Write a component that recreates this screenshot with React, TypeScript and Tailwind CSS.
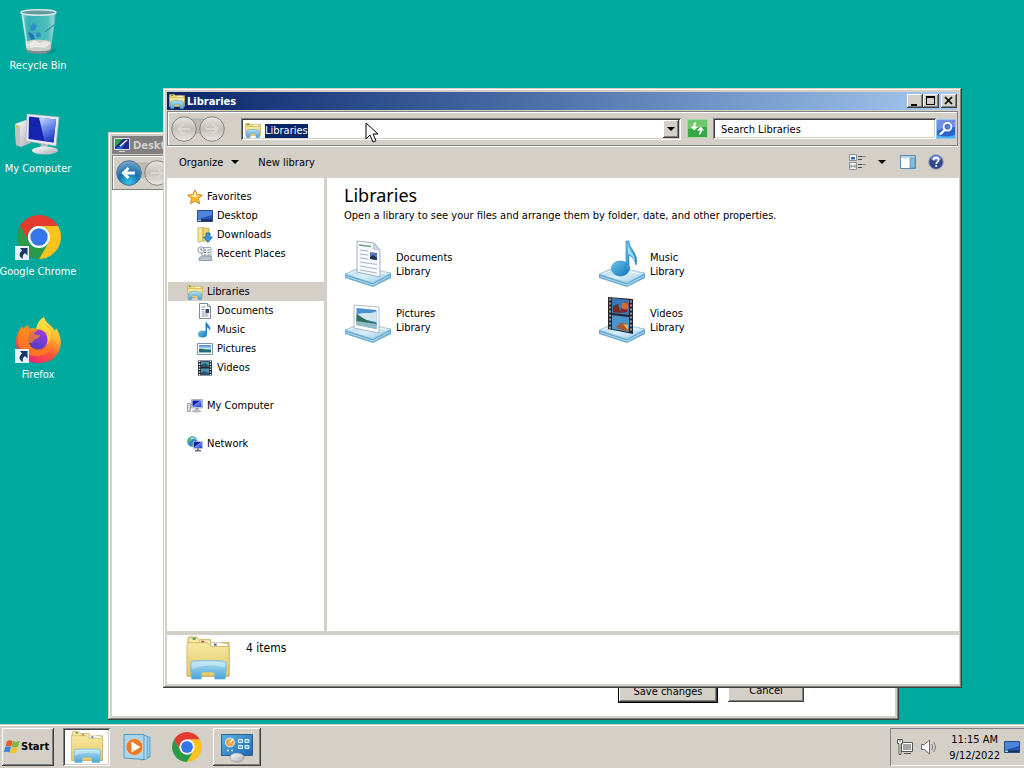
import React, { useEffect, useRef } from "react";

type IconProps = { className?: string };

const raised =
  "bg-[#d4d0c8] shadow-[inset_-1px_-1px_#404040,inset_1px_1px_#fff,inset_-2px_-2px_#808080]";
const sunken =
  "bg-white shadow-[inset_1px_1px_#808080,inset_-1px_-1px_#fff,inset_2px_2px_#404040,inset_-2px_-2px_#d4d0c8]";
const frame =
  "bg-[#d4d0c8] shadow-[inset_-1px_-1px_#404040,inset_1px_1px_#d4d0c8,inset_-2px_-2px_#808080,inset_2px_2px_#fff]";
const band =
  "border border-[#808080] shadow-[inset_1px_1px_#fff,0_1px_#fff]";

/* shared gradients */
const Gradients: React.FC = () => (
  <svg width="0" height="0" className="absolute" aria-hidden="true">
    <defs>
      <linearGradient id="screen" x1="0" y1="0" x2="1" y2="1">
        <stop offset="0" stopColor="#0a1a9c" />
        <stop offset="0.42" stopColor="#1424b4" />
        <stop offset="0.46" stopColor="#6b8af0" />
        <stop offset="1" stopColor="#2036c8" />
      </linearGradient>
      <linearGradient id="glass" x1="0.3" y1="0" x2="0.7" y2="1">
        <stop offset="0" stopColor="#b9cdfa" />
        <stop offset="0.5" stopColor="#5b7ce6" />
        <stop offset="1" stopColor="#1c2cb8" />
      </linearGradient>
      <linearGradient id="folder" x1="0" y1="0" x2="0" y2="1">
        <stop offset="0" stopColor="#f6e9a0" />
        <stop offset="1" stopColor="#e3c966" />
      </linearGradient>
      <linearGradient id="stand" x1="0" y1="0" x2="0" y2="1">
        <stop offset="0" stopColor="#b4dff2" />
        <stop offset="1" stopColor="#4aa4dc" />
      </linearGradient>
      <linearGradient id="tray" x1="0" y1="0" x2="1" y2="1">
        <stop offset="0" stopColor="#9fcde6" />
        <stop offset="0.5" stopColor="#daeff9" />
        <stop offset="1" stopColor="#8fc4e2" />
      </linearGradient>
      <linearGradient id="note" x1="0" y1="0" x2="1" y2="1">
        <stop offset="0" stopColor="#6cc6f2" />
        <stop offset="1" stopColor="#0d72b8" />
      </linearGradient>
      <linearGradient id="photo" x1="0" y1="0" x2="0" y2="1">
        <stop offset="0" stopColor="#3f86c4" />
        <stop offset="0.5" stopColor="#d3ecf4" />
        <stop offset="0.6" stopColor="#4f8b78" />
        <stop offset="1" stopColor="#8fc8d6" />
      </linearGradient>
      <radialGradient id="blueOrb" cx="0.5" cy="0.9" r="0.9">
        <stop offset="0" stopColor="#38c4ee" />
        <stop offset="0.5" stopColor="#1670ae" />
        <stop offset="1" stopColor="#7fa9cc" />
      </radialGradient>
      <linearGradient id="grayOrb" x1="0" y1="0" x2="0" y2="1">
        <stop offset="0" stopColor="#e9e7e3" />
        <stop offset="0.5" stopColor="#c3c0ba" />
        <stop offset="1" stopColor="#eceae6" />
      </linearGradient>
      <linearGradient id="fox" x1="0.8" y1="0" x2="0.3" y2="1">
        <stop offset="0" stopColor="#fff44f" />
        <stop offset="0.35" stopColor="#ffb32c" />
        <stop offset="0.65" stopColor="#ff5a36" />
        <stop offset="1" stopColor="#e8207a" />
      </linearGradient>
      <linearGradient id="foxCore" x1="0.7" y1="0" x2="0.3" y2="1">
        <stop offset="0" stopColor="#a33cd8" />
        <stop offset="1" stopColor="#4a3fc4" />
      </linearGradient>
      <linearGradient id="bin" x1="0" y1="0" x2="1" y2="0">
        <stop offset="0" stopColor="#c4e6ea" stopOpacity="0.8" />
        <stop offset="0.2" stopColor="#4fb3bf" stopOpacity="0.7" />
        <stop offset="0.75" stopColor="#6fc6cc" stopOpacity="0.7" />
        <stop offset="0.9" stopColor="#b5dfe2" stopOpacity="0.8" />
        <stop offset="1" stopColor="#4a8a90" stopOpacity="0.9" />
      </linearGradient>
      <linearGradient id="metal" x1="0" y1="0" x2="1" y2="1">
        <stop offset="0" stopColor="#ffffff" />
        <stop offset="1" stopColor="#a9adb5" />
      </linearGradient>
      <linearGradient id="panelBlue" x1="0" y1="0" x2="1" y2="1">
        <stop offset="0" stopColor="#5db4ea" />
        <stop offset="1" stopColor="#1a66ac" />
      </linearGradient>
    </defs>
  </svg>
);

const Shortcut: React.FC = () => (
  <g>
    <path d="M1 32h14v14H1z" fill="#e9f2f8" />
    <path
      d="M6 34h7.500v7.500l-2.600-2.500c-2 1.800-2.600 3.300-2 5.800-4-1.500-4.600-5.600-.7-8.400z"
      fill="#15386b"
    />
  </g>
);

const RecycleBin: React.FC<IconProps> = ({ className }) => (
  <svg viewBox="0 0 48 48" className={className}>
    <path d="M34 42l9-2-2 4-10 3z" fill="#087f78" opacity=".5" />
    <path d="M7 4l5.500 37c2 4 21 4 24 0l6-37z" fill="url(#bin)" />
    <path d="M11.500 34c4-3 22-3 26 0l-1 8c-4 4-20 4-24 0z" fill="#c9cfca" />
    <path d="M14 36l6-4 6 3 5-2 6 2-6 5-8-1-7 1z" fill="#e9e8e3" />
    <path d="M12.500 41c4 3 20 3 24 0v2c-4 4-20 4-24 0z" fill="#7f8b8c" />
    <path d="M16 18l4-3 3 3-2 4-4 1z" fill="#2a88c8" opacity=".8" />
    <path d="M14 24l5 2 2 5-4 1z" fill="#1d62b4" opacity=".8" />
    <path d="M22 25l4-1 1 4-4 2z" fill="#2a78c4" opacity=".7" />
    <path d="M31 24l9-7" stroke="#3f8d98" strokeWidth="1.200" />
    <ellipse cx="24.500" cy="4.500" rx="17.500" ry="2.700" fill="#62999e" stroke="#d9e9ea" strokeWidth="1.500" />
    <path d="M8.500 7l5 33" stroke="#fff" strokeOpacity=".6" strokeWidth="1.500" />
  </svg>
);

const Computer: React.FC<IconProps> = ({ className }) => (
  <svg viewBox="0 0 48 48" className={className}>
    <path d="M1 13l11-4 5 3v20L7 36l-5-2z" fill="url(#metal)" />
    <path d="M1 13l5 2v20l-4-1z" fill="#c4c0bb" />
    <path d="M3 15v2" stroke="#e4c23e" strokeWidth="2" />
    <path d="M27 32l7 1-1 6h-7z" fill="#b6bac2" />
    <ellipse cx="31" cy="39.500" rx="13" ry="4" fill="url(#metal)" />
    <path d="M13 3l32 3-3 29-30-5z" fill="#e8eaf0" stroke="#a9aeba" strokeWidth=".6" />
    <path d="M15 5.500l27 3-2.500 23L14.500 28z" fill="#1524b0" />
    <path d="M25 6.600l17 1.900-2.500 23-9-1.400z" fill="url(#glass)" />
  </svg>
);

const ChromeArt: React.FC = () => (
  <g>
    <path d="M24 13H43.050A22 22 0 0 0 4.950 13L14.470 29.500A11 11 0 0 1 24 13Z" fill="#e33b2e" />
    <path d="M43.050 13H24A11 11 0 0 1 33.530 29.500L24 46A22 22 0 0 0 43.050 13Z" fill="#fcc31e" />
    <path d="M4.950 13A22 22 0 0 0 24 46L33.530 29.500A11 11 0 0 1 14.470 29.500Z" fill="#2a9a48" />
    <circle cx="24" cy="24" r="11" fill="#fff" />
    <circle cx="24" cy="24" r="8.700" fill="#3576e8" />
  </g>
);

const Chrome: React.FC<IconProps> = ({ className }) => (
  <svg viewBox="2 2 44 44" className={className}>
    <ChromeArt />
  </svg>
);

const ChromeShortcut: React.FC<IconProps> = ({ className }) => (
  <svg viewBox="0 0 48 48" className={className}>
    <g transform="translate(1 -1)">
      <ChromeArt />
    </g>
    <Shortcut />
  </svg>
);

const FirefoxShortcut: React.FC<IconProps> = ({ className }) => (
  <svg viewBox="0 0 48 48" className={className}>
    <path
      d="M30 0c1 4 4 6 7 9 1 1 3 3 4 5l1-3c4 6 6 13 4 20-3 10-11 15-21 15C12 46 2 38 2 25c0-6 2-11 5-14l1-2 1 3 5-4 1 4c3-1 5-1 8 0 0-5 3-10 7-12z"
      fill="url(#fox)"
    />
    <circle cx="24" cy="22.500" r="10" fill="url(#foxCore)" />
    <path
      d="M7 11l1-2 1 3 5-4 1 4c3-1 6 0 8 1l1 1c-3 1-4 2-4 3 2 1 5 1 6 1 0 3-4 4-6 5-1 3-3 3-5 3 1 5 6 7 11 7 6 0 10-4 12-9 1 7-5 14-13 15C13 40 4 33 4 24c0-5 1-9 3-13z"
      fill="#ff8a16"
      fillOpacity=".7"
    />
    <path d="M22 12c5-1 10 1 13 7l-3-2c2 4 2 8 0 11 5-4 6-10 3-16-4-3-5-7-5-12-5 3-7 7-8 12z" fill="#ffe23e" fillOpacity=".75" />
    <Shortcut />
  </svg>
);

const LibrariesIcon: React.FC<IconProps> = ({ className }) => (
  <svg viewBox="0 0 16 16" className={className}>
    <path d="M.5 1.500h5l1 1h9v4H.5z" fill="#ecd67c" stroke="#bfa24a" strokeWidth=".6" />
    <path d="M2 2.500h2" stroke="#3d9c55" />
    <path d="M8 3.300h5" stroke="#fff" />
    <path d="M.5 4.500h15v9H.5z" fill="url(#folder)" stroke="#c9ae55" strokeWidth=".6" />
    <path d="M1.500 10c0-3.500 13-3.500 13 0v5.500H11V12c-1-1-5-1-6 0v3.500H1.500z" fill="url(#stand)" stroke="#4d9ac6" strokeWidth=".5" />
  </svg>
);

const BigFolder: React.FC<IconProps> = ({ className }) => (
  <svg viewBox="0 0 48 48" className={className}>
    <path d="M4 2h8l2 3h13v4h9l2-1h8v35H3V4z" fill="#e5cc72" stroke="#b49b4c" strokeWidth=".7" />
    <path d="M4 3h8l2 2h4v4H4z" fill="#f7e9a4" />
    <path d="M15 5h10l2 2v4H15z" fill="#fbf2c4" stroke="#b49b4c" strokeWidth=".5" />
    <path d="M27 8h10l8 1v4H27z" fill="#fffdf0" stroke="#b49b4c" strokeWidth=".5" />
    <path d="M8 4h3" stroke="#2f9a4c" strokeWidth="2" />
    <path d="M17 7h3" stroke="#c8402c" strokeWidth="2" />
    <path d="M30 10h3" stroke="#3a63b8" strokeWidth="2" />
    <path d="M2 8h22l4 4h18v31H2z" fill="url(#folder)" stroke="#c0a552" strokeWidth=".7" />
    <path d="M6 28c1-2 36-2 37 0v9l-1 9H31v-7c-3-1-11-1-14 0v7H7l-1-9z" fill="url(#stand)" stroke="#6fb4dc" strokeWidth=".7" />
    <path d="M7 29c4-1 32-1 35 0v5c-10-3-25-3-35 2z" fill="#fff" fillOpacity=".35" />
  </svg>
);

const Star: React.FC<IconProps> = ({ className }) => (
  <svg viewBox="0 0 16 16" className={className}>
    <path
      d="M8 .8l2.200 4.700 5.200.6-3.900 3.500 1.100 5.200L8 12.300l-4.600 2.500 1.100-5.200L.6 6.100l5.200-.6z"
      fill="#fbb82e"
      stroke="#c77a18"
      strokeWidth=".8"
    />
    <path d="M8 2.500l1.500 3.800 3.500.5L8 8.500 3 6.800l3.500-.5z" fill="#fff0a8" />
  </svg>
);

const DesktopIcon: React.FC<IconProps> = ({ className }) => (
  <svg viewBox="0 0 16 16" className={className}>
    <path d="M.5 2.500h15v11H.5z" fill="#2457b4" stroke="#274a80" />
    <path d="M1 3h14v4L1 11z" fill="#4d86dc" />
    <path d="M1 11.500h14V13H1z" fill="#1b2d50" />
    <path d="M1 11.500h3V13H1z" fill="#9fd2f0" />
  </svg>
);

const Downloads: React.FC<IconProps> = ({ className }) => (
  <svg viewBox="0 0 16 16" className={className}>
    <path d="M1 1l5-.5V14l-5 1z" fill="#f6e69a" stroke="#c0a040" strokeWidth=".7" />
    <path d="M6 1h6v13H6z" fill="#ecd473" stroke="#c0a040" strokeWidth=".7" />
    <path d="M9 6h4v4h2.500L11 15.500 6.500 10H9z" fill="#3a96dc" stroke="#1a5c9c" strokeWidth=".7" />
  </svg>
);

const Recent: React.FC<IconProps> = ({ className }) => (
  <svg viewBox="0 0 16 16" className={className}>
    <path d="M5 1.500h9v10H5z" fill="#f0f3f6" stroke="#8794a2" strokeWidth=".8" />
    <path d="M7 4h2m1.500 0h2M7 6.500h2m1.500 0h2M7 9h2m1.500 0h2" stroke="#6d7c8c" />
    <path d="M2 12l3-2h9l1 4.500H2z" fill="#b8c2cc" stroke="#78838e" strokeWidth=".7" />
    <circle cx="4" cy="4" r="3.200" fill="#eef4fa" stroke="#7b8ca0" strokeWidth=".8" />
    <path d="M4 2.200V4h1.600" stroke="#40506a" strokeWidth=".7" fill="none" />
  </svg>
);

const DocumentIcon: React.FC<IconProps> = ({ className }) => (
  <svg viewBox="0 0 16 16" className={className}>
    <path d="M2.500.5h8l3 3v12h-11z" fill="#fff" stroke="#7f8a96" />
    <path d="M10.500.5v3h3" fill="#dfe6ec" stroke="#7f8a96" />
    <path d="M4.500 4h4M4.500 6.500h3M4.500 9h3M4.500 11h7M4.500 13h7" stroke="#8b98ac" />
    <path d="M8.500 6h3.500v4H8.500z" fill="#31456e" />
  </svg>
);

const MusicIcon: React.FC<IconProps> = ({ className }) => (
  <svg viewBox="0 0 16 16" className={className}>
    <ellipse cx="5.500" cy="12" rx="4.500" ry="3.500" fill="url(#note)" />
    <path d="M8.500.5h1.500c.5 2.500 4.500 3.500 3 8.500-.5-2-1.500-3-3-3.500V12H8.500z" fill="#2284c4" />
  </svg>
);

const PictureIcon: React.FC<IconProps> = ({ className }) => (
  <svg viewBox="0 0 16 16" className={className}>
    <path d="M.5 2.500h15v11H.5z" fill="#fff" stroke="#7f93a6" />
    <path d="M2 4h12v8H2z" fill="url(#photo)" />
    <path d="M2 8c3-1 5 1 12 1v2H2z" fill="#256a6c" />
  </svg>
);

const VideoIcon: React.FC<IconProps> = ({ className }) => (
  <svg viewBox="0 0 16 16" className={className}>
    <path d="M1 .5h14v15H1z" fill="#20262e" />
    <path d="M4 1.500h8V7H4zM4 8.500h8v6H4z" fill="#4c93b8" />
    <path d="M4 5l4-2 4 3v1H4zM4 13l3-2 5 2v1.500H4z" fill="#27546e" />
    <path d="M2.500 1v14M13.500 1v14" stroke="#f0f4f8" strokeWidth="1.400" strokeDasharray="1.300 1.300" />
  </svg>
);

const MyComputerSmall: React.FC<IconProps> = ({ className }) => (
  <svg viewBox="0 0 16 16" className={className}>
    <path d="M.5 5.500h3v8h-3z" fill="#d6d8dc" stroke="#83888f" strokeWidth=".7" />
    <path d="M4.500 1.500h11v8.500h-11z" fill="#dfe2ea" stroke="#9298a6" strokeWidth=".7" />
    <path d="M5.500 2.500h9V9h-9z" fill="url(#screen)" />
    <path d="M8.500 10h3v2h-3z" fill="#9aa0aa" />
    <ellipse cx="9.500" cy="13" rx="4.500" ry="1.500" fill="#b8bcc4" />
  </svg>
);

const NetworkIcon: React.FC<IconProps> = ({ className }) => (
  <svg viewBox="0 0 16 16" className={className}>
    <circle cx="5.500" cy="5.500" r="5.200" fill="#2c86c8" />
    <path d="M2 2.500c2-2 4-2 5-1L5 4 3 5.500.7 7zM4 7l3 1-1 2.500z" fill="#5cc06a" />
    <path d="M4 2.500c3-1 5 0 6 2" stroke="#d0f0ff" fill="none" />
    <path d="M6.500 5.500h9v7h-9z" fill="url(#screen)" stroke="#c2c8d8" strokeWidth=".7" />
    <path d="M10 12.500h2V14h2v1.500H8V14h2z" fill="#6c7080" />
  </svg>
);

/* pale glass stand under each library picture */
const LibraryBase: React.FC = () => (
  <g>
    <path d="M1 34l17-7 29 6v5L29 47 1 38z" fill="#68a8cc" />
    <path d="M1 34l17-7 29 6-18 10z" fill="url(#tray)" stroke="#8abbd6" strokeWidth=".5" />
    <path d="M4 34l14-5 25 5" stroke="#fff" strokeOpacity=".7" fill="none" />
    <path d="M2 36.500l27 8.500 17-9" stroke="#a5d4ec" strokeWidth="1.200" fill="none" />
  </g>
);

const DocumentsLibrary: React.FC<IconProps> = ({ className }) => (
  <svg viewBox="0 0 48 48" className={className}>
    <LibraryBase />
    <path d="M13 1l17 2 6 7v27L13 32z" fill="#f7f9fd" stroke="#8e9fb6" strokeWidth=".8" />
    <path d="M30 3l-1 6 7 1z" fill="#c9dce4" stroke="#8e9fb6" strokeWidth=".5" />
    <path d="M15 5l12 1.500" stroke="#6f9f86" strokeWidth="1.500" />
    <path d="M16 10l8 1M16 14l8 1M16 18l8 1M16 22l17 2.500M16 26l17 3M16 30l17 3" stroke="#a9b3d0" />
    <path d="M26 12l7 1v7l-7-1z" fill="#4f78b4" />
    <path d="M26 17l3-2 4 3v2l-7-1z" fill="#1f3358" />
  </svg>
);

const PicturesLibrary: React.FC<IconProps> = ({ className }) => (
  <svg viewBox="0 0 48 48" className={className}>
    <LibraryBase />
    <path d="M10 9l25 2v26L10 32z" fill="#fdfdfd" stroke="#9aa8b6" strokeWidth=".8" />
    <path d="M12.500 12l20 2v19L12.500 29z" fill="#4a90cf" />
    <path d="M12.500 19c6-4 14 0 20-4v11l-20-4z" fill="#cfe6f0" />
    <path d="M12.500 18c6 3 10 8 20 9v2l-20-3z" fill="#2f6c56" />
    <path d="M12.500 25l20 3v5L12.500 29z" fill="#8fbcc6" />
  </svg>
);

const MusicLibrary: React.FC<IconProps> = ({ className }) => (
  <svg viewBox="0 0 48 48" className={className}>
    <LibraryBase />
    <ellipse cx="22.500" cy="28.500" rx="9" ry="7.500" fill="url(#note)" stroke="#2576ae" strokeWidth=".6" />
    <path d="M28 1h3c0 8 10 12 7 24-1-5-3-8-7-10v15h-3z" fill="url(#note)" stroke="#2576ae" strokeWidth=".6" />
    <path d="M30 3c1 9 8 11 7 19-1-4-3-7-7-8z" fill="#9adcf8" />
  </svg>
);

const VideosLibrary: React.FC<IconProps> = ({ className }) => (
  <svg viewBox="0 0 48 48" className={className}>
    <LibraryBase />
    <path d="M10 1l25 2v35L10 33z" fill="#23262c" />
    <path d="M14 2l17 2v15l-17-2z" fill="#3979b8" />
    <path d="M14 19l17 2v15l-17-3z" fill="#4a93cf" />
    <path d="M15 10l5-2 2 7 5-10 4 3-2 8-8 1-6-1z" fill="#7a2b25" />
    <circle cx="27" cy="10" r="3.500" fill="#d46a34" />
    <path d="M18 31l5-4 6 1 2 7-8-1z" fill="#a8572f" />
    <path d="M25 28l5 1v5z" fill="#e5c14e" />
    <path d="M12 2.500v30M33 4.500v32" stroke="#aab4c0" strokeWidth="1.600" strokeDasharray="2 2" />
  </svg>
);

const PlayerIcon: React.FC<IconProps> = ({ className }) => (
  <svg viewBox="0 0 32 32" className={className}>
    <path d="M22 5l7 1v20l-7 2z" fill="#8cc8ea" stroke="#4b8fbc" strokeWidth=".7" />
    <path d="M20 4l6 1v23l-6 1z" fill="#b4def4" stroke="#4b8fbc" strokeWidth=".7" />
    <path d="M3 3.500h20v25L3 27z" fill="#a6d6ee" stroke="#4b8fbc" strokeWidth=".9" />
    <circle cx="13.500" cy="16" r="8.500" fill="#ee7a22" stroke="#d9d4cc" strokeWidth=".8" />
    <path d="M10.500 10.500l9 5.500-9 5.500z" fill="#fff" />
  </svg>
);

const ControlPanel: React.FC<IconProps> = ({ className }) => (
  <svg viewBox="0 0 32 32" className={className}>
    <path d="M.5 3.500h31v21H.5z" fill="url(#panelBlue)" stroke="#2c618e" />
    <circle cx="9" cy="11.500" r="4.500" fill="#f0a63c" stroke="#d9edf8" />
    <path d="M9 11.500l3-3.500" stroke="#fff" strokeWidth="1.500" />
    <path d="M17.500 8.500h4v3h-4zM24 8.500h4v3h-4zM17.500 14.500h4v3h-4zM24 14.500h4v3h-4z" fill="#5ab4ea" stroke="#e4f4fc" />
    <path d="M6 19.500h2m2 0h2" stroke="#e4f4fc" strokeWidth="1.500" />
    <ellipse cx="16" cy="26.500" rx="7" ry="4.500" fill="url(#metal)" stroke="#8a9096" strokeWidth=".7" />
  </svg>
);

const WindowsFlag: React.FC<IconProps> = ({ className }) => (
  <svg viewBox="0 0 16 16" className={className}>
    <path d="M3 2.200c2-1.400 3.800-1.300 5.600-.3L7.200 7.400c-2-1-3.600-1-5.700.1z" fill="#e2582c" />
    <path d="M9 2.100c2 1 3.900.9 6.800-.3L14.200 7.600c-2.500 1.200-4.300 1.100-6.600.1z" fill="#7db83c" />
    <path d="M1.300 8.100c2-1.100 3.900-1 5.700-.1l-1.500 5.600C3.600 12.500 2 12.500-.2 13.600z" fill="#3d87d4" />
    <path d="M7.400 8.300c2.200 1 4.200.9 6.600-.2l-1.600 5.600c-2.500 1.200-4.300 1-6.500-.1z" fill="#f6c22e" />
  </svg>
);

const ViewsIcon: React.FC<IconProps> = ({ className }) => (
  <svg viewBox="0 0 18 16" className={className}>
    <path d="M.5.5h7v6h-7zM.5 8.500h7v7h-7z" fill="#fff" stroke="#8d9298" />
    <path d="M2 3h4v2.500H2z" fill="#2a6aa8" />
    <path d="M2 10.500v3l2-2 2 2v-3" stroke="#5d7d64" fill="none" />
    <path d="M9 2.500h4M9 5.500h4M9 10.500h4M9 13.500h4" stroke="#4a4a4a" />
    <path d="M13 2.500h4M13 10.500h4" stroke="#8c8c8c" />
  </svg>
);

const PaneIcon: React.FC<IconProps> = ({ className }) => (
  <svg viewBox="0 0 16 16" className={className}>
    <path d="M.5 1.500h15v13H.5z" fill="#fff" stroke="#5d86ae" />
    <path d="M1 2h14v2H1z" fill="#b4d2ea" />
    <path d="M10 4h5v10h-5z" fill="#84bbe0" stroke="#5d86ae" strokeWidth=".7" />
  </svg>
);

const HelpIcon: React.FC<IconProps> = ({ className }) => (
  <svg viewBox="0 0 16 16" className={className}>
    <circle cx="8" cy="8" r="7.300" fill="#33458f" stroke="#98a0c0" />
    <path d="M2.500 5a6 6 0 0 1 11 0c-3 2-8 2-11 0z" fill="#7c93d8" />
    <path d="M5.500 6.200c0-3.400 5.200-3.200 5.200-.3 0 1.800-2.500 2-2.500 4" stroke="#fff" strokeWidth="1.700" fill="none" />
    <circle cx="8.200" cy="12" r="1.100" fill="#fff" />
  </svg>
);

const RefreshIcon: React.FC<IconProps> = ({ className }) => (
  <svg viewBox="0 0 20 18" className={className}>
    <path d="M.5.500h19v17H.5z" fill="#35a744" stroke="#a5d9a0" />
    <path d="M1 1h18v7C12 6 8 11 1 9z" fill="#6fc86c" />
    <path d="M9 3C6.500 3 6 4.500 6 7H3.500L7 11l3.500-4H8c0-2 0-2.500 1-4z" fill="#fff" />
    <path d="M11 15c2.500 0 3-1.500 3-4h2.500L13 7l-3.500 4H12c0 2 0 2.500-1 4z" fill="#fff" />
  </svg>
);

const SearchIcon: React.FC<IconProps> = ({ className }) => (
  <svg viewBox="0 0 20 20" className={className}>
    <rect x=".5" y=".5" width="19" height="19" rx="1.500" fill="#2c62cc" stroke="#8fc8f0" />
    <path d="M1 1h18v7C12 9 7 9 1 12z" fill="#6f8ee6" />
    <path d="M1 16c6 2 12 2 18 0v3H1z" fill="#48b8ee" />
    <circle cx="11.500" cy="7.800" r="3.900" fill="#4b78dc" stroke="#fff" strokeWidth="1.800" />
    <path d="M8.700 10.800L4.500 15" stroke="#fff" strokeWidth="2.400" strokeLinecap="round" />
  </svg>
);

const PersonalizeIcon: React.FC<IconProps> = ({ className }) => (
  <svg viewBox="0 0 16 16" className={className}>
    <path d="M.5 1.500h15v11H.5z" fill="#1c2b8c" stroke="#e0e0e0" />
    <path d="M1 2h8L1 10z" fill="#2fa04a" />
    <path d="M1 12h6l4-5-4 1z" fill="#2a63d0" />
    <path d="M6 9l7-6" stroke="#fff" strokeWidth="1.500" />
    <path d="M5 14.500h6" stroke="#d8d8d8" />
  </svg>
);

/* back and forward buttons sit on one pill */
const NavArrows: React.FC<{ active?: boolean }> = ({ active }) => (
  <svg viewBox="0 0 56 28" className="h-7 w-14 shrink-0">
    <path d="M14 4h28v17c-8-4-20-4-28 0z" fill="#bdbab4" stroke="#a09d97" strokeWidth=".6" />
    <circle cx="14" cy="14" r="12.300" fill={active ? "url(#blueOrb)" : "url(#grayOrb)"} stroke={active ? "#4d7390" : "#85827d"} />
    <circle cx="42" cy="14" r="12.300" fill="url(#grayOrb)" stroke="#85827d" />
    <path
      d="M20 14H9M13.500 9L8.500 14l5 5"
      stroke={active ? "#fff" : "#d9d7d2"}
      strokeWidth={active ? 3 : 2}
      fill="none"
    />
    <path d="M36 14h11M42.500 9l5 5-5 5" stroke="#d9d7d2" strokeWidth="2" fill="none" />
  </svg>
);

const Caret: React.FC = () => (
  <svg viewBox="0 0 8 4" className="h-1 w-2">
    <path d="M0 0h8L4 4z" fill="#000" />
  </svg>
);

const shortcuts = [
  { label: "Recycle Bin", Icon: RecycleBin },
  { label: "My Computer", Icon: Computer },
  { label: "Google Chrome", Icon: ChromeShortcut },
  { label: "Firefox", Icon: FirefoxShortcut },
];

const navGroups = [
  {
    label: "Favorites",
    Icon: Star,
    items: [
      { label: "Desktop", Icon: DesktopIcon },
      { label: "Downloads", Icon: Downloads },
      { label: "Recent Places", Icon: Recent },
    ],
  },
  {
    label: "Libraries",
    Icon: LibrariesIcon,
    current: true,
    items: [
      { label: "Documents", Icon: DocumentIcon },
      { label: "Music", Icon: MusicIcon },
      { label: "Pictures", Icon: PictureIcon },
      { label: "Videos", Icon: VideoIcon },
    ],
  },
  { label: "My Computer", Icon: MyComputerSmall, items: [] },
  { label: "Network", Icon: NetworkIcon, items: [] },
];

const libraries = [
  { label: "Documents", Icon: DocumentsLibrary },
  { label: "Music", Icon: MusicLibrary },
  { label: "Pictures", Icon: PicturesLibrary },
  { label: "Videos", Icon: VideosLibrary },
];

const SettingsWindow: React.FC = () => (
  <section className={`absolute top-[132px] right-[125px] bottom-1 left-[108px] flex flex-col p-1 ${frame}`}>
    <header className="flex h-[18px] items-center gap-[3px] bg-[#808080] pl-[2px] font-bold text-[#d4d0c8]">
      <PersonalizeIcon className="size-4" />
      <span className="pt-[2px]">Desktop</span>
    </header>
    <div className={`mt-px flex h-[35px] items-center pl-[2px] ${band}`}>
      <NavArrows active />
    </div>
    <div className="flex flex-1 items-end justify-end gap-[10px] bg-white pr-[91px] pb-[13px]">
      <button className="h-6 w-[100px] border border-black bg-[#d4d0c8] pt-[2px] shadow-[inset_-1px_-1px_#404040,inset_1px_1px_#fff,inset_-2px_-2px_#808080]">
        Save changes
      </button>
      <button className={`mb-px h-[23px] w-[76px] pt-[2px] ${raised}`}>Cancel</button>
    </div>
  </section>
);

const LibrariesWindow: React.FC = () => {
  const addressRef = useRef<HTMLInputElement>(null);

  useEffect(() => {
    addressRef.current?.focus();
    addressRef.current?.select();
  }, []);

  return (
    <section className={`absolute top-[88px] right-[62px] bottom-9 left-[163px] flex flex-col py-1 pr-[3px] pl-1 ${frame}`}>
      <header className="mr-[2px] flex h-[18px] items-center bg-linear-to-r from-[#0a246a] to-[#a6caf0] pl-[2px] font-bold text-white">
        <LibrariesIcon className="size-4" />
        <h1 className="flex-1 pt-[2px] pl-[2px]">Libraries</h1>
        <button aria-label="Minimize" className={`h-[14px] w-4 ${raised}`}>
          <svg viewBox="0 0 16 14" className="h-[14px] w-4">
            <path d="M4 10h6v2H4z" />
          </svg>
        </button>
        <button aria-label="Maximize" className={`h-[14px] w-4 ${raised}`}>
          <svg viewBox="0 0 16 14" className="h-[14px] w-4">
            <path d="M3 2h9v9H3zM4 4v6h7V4z" fillRule="evenodd" />
          </svg>
        </button>
        <button aria-label="Close" className={`ml-[2px] h-[14px] w-4 ${raised}`}>
          <svg viewBox="0 0 16 14" className="h-[14px] w-4">
            <path d="M4 3l7 7M11 3l-7 7" stroke="#000" strokeWidth="1.700" />
          </svg>
        </button>
      </header>

      <div className={`mt-px mr-px flex h-[35px] items-center pr-px pl-[2px] ${band}`}>
        <NavArrows />
        <div className={`ml-[15px] flex h-[22px] flex-1 items-end p-[2px] ${sunken}`}>
          <LibrariesIcon className="ml-[2px] size-4" />
          <input
            ref={addressRef}
            aria-label="Address"
            defaultValue="Libraries"
            className="ml-1 h-[14px] min-w-0 flex-1 leading-[14px] outline-none selection:bg-[#0a246a] selection:text-white"
          />
          <button aria-label="Previous locations" className={`flex h-[18px] w-4 items-center justify-center ${raised}`}>
            <Caret />
          </button>
        </div>
        <button aria-label="Refresh" className="ml-[6px]">
          <RefreshIcon className="h-[19px] w-[21px]" />
        </button>
        <input
          aria-label="Search Libraries"
          placeholder="Search Libraries"
          className={`ml-[5px] h-[21px] w-[223px] px-2 pt-px placeholder:text-black ${sunken}`}
        />
        <button aria-label="Search">
          <SearchIcon className="size-5" />
        </button>
      </div>

      <div className="flex h-8 items-center pr-[15px] pl-3">
        <button className="flex items-center gap-2">
          <span className="pt-[2px]">Organize</span>
          <Caret />
        </button>
        <button className="ml-[19px] pt-[2px]">New library</button>
        <button aria-label="Change your view" className="ml-auto flex items-center gap-[11px]">
          <ViewsIcon className="h-4 w-[18px]" />
          <Caret />
        </button>
        <button aria-label="Show the preview pane" className="ml-[14px]">
          <PaneIcon className="size-4" />
        </button>
        <button aria-label="Help" className="ml-3">
          <HelpIcon className="size-4" />
        </button>
      </div>

      <div className="flex min-h-0 flex-1 bg-white">
        <nav className="flex w-40 shrink-0 flex-col gap-[19px] border-r-3 border-[#d4d0c8] pt-[9px] pl-px">
          {navGroups.map(({ label, Icon, current, items }) => (
            <ul key={label}>
              <li>
                <a href="#" className={`flex h-[19px] items-center gap-1 pl-[19px] ${current ? "bg-[#d4d0c8]" : ""}`}>
                  <Icon className="size-4" />
                  <span className="pt-[2px]">{label}</span>
                </a>
              </li>
              {items.map((item) => (
                <li key={item.label}>
                  <a href="#" className="flex h-[19px] items-center gap-1 pl-[29px]">
                    <item.Icon className="size-4" />
                    <span className="pt-[2px]">{item.label}</span>
                  </a>
                </li>
              ))}
            </ul>
          ))}
        </nav>
        <main className="flex-1 pt-[5px] pl-[17px]">
          <h2 className="font-['Noto_Sans',sans-serif] text-[18px] leading-6">Libraries</h2>
          <p className="pt-px leading-4">
            Open a library to see your files and arrange them by folder, date, and other properties.
          </p>
          <ul className="mt-4 grid grid-cols-[repeat(auto-fill,254px)] gap-y-2">
            {libraries.map(({ label, Icon }) => (
              <li key={label}>
                <a href="#" className="flex items-center gap-1 leading-[14px]">
                  <Icon className="size-12" />
                  <span className="pt-[2px]">
                    {label}
                    <br />
                    Library
                  </span>
                </a>
              </li>
            ))}
          </ul>
        </main>
      </div>

      <footer className="flex h-[53px] border-t-4 border-[#d4d0c8] bg-white pl-[18px] text-xs">
        <BigFolder className="size-[46px]" />
        <span className="pt-[5px] pl-[15px]">4 items</span>
      </footer>
    </section>
  );
};

const Taskbar: React.FC = () => (
  <footer className="flex h-11 shrink-0 border-t border-[#d4d0c8] bg-[#d4d0c8] pt-[3px] pb-[2px] pl-[2px] shadow-[inset_0_1px_#fff]">
    <button className={`flex w-[52px] items-center gap-px pl-[2px] font-bold ${raised}`}>
      <WindowsFlag className="size-4" />
      Start
    </button>
    <button aria-label="Windows Explorer" className={`ml-[9px] flex w-[47px] items-center justify-center ${sunken}`}>
      <BigFolder className="size-[34px]" />
    </button>
    <button aria-label="Media Player" className="flex w-[53px] items-center justify-center">
      <PlayerIcon className="size-8" />
    </button>
    <button aria-label="Google Chrome" className="flex w-[47px] items-center justify-center">
      <Chrome className="size-[30px]" />
    </button>
    <button aria-label="Control Panel" className={`ml-[3px] flex w-12 items-center justify-center ${raised}`}>
      <ControlPanel className="size-8" />
    </button>
    <div className="ml-auto flex items-center pr-1 pl-[7px] shadow-[inset_1px_1px_#808080,inset_0_-1px_#fff]">
      <svg viewBox="0 0 16 16" className="size-4">
        <path d="M4.500 3.500h11v9h-11z" fill="#fff" stroke="#555" />
        <path d="M6 5h8v6H6z" fill="#a5a5a5" />
        <path d="M7 14.500h7" stroke="#555" />
        <path d="M.5.5h5v4h-1.500v11h-2v-11H.5z" fill="#fff" stroke="#555" />
        <path d="M3 0v3" stroke="#555" />
      </svg>
      <svg viewBox="0 0 16 16" className="ml-2 size-4">
        <path d="M.5 5.500h3l5-4.500v14l-5-4.500h-3z" fill="#fff" stroke="#666" />
        <path d="M10.500 5c1.500 2 1.500 4 0 6M12.500 3c2.500 3 2.500 7 0 10" fill="none" stroke="#777" />
      </svg>
      <div className="ml-3 pt-px text-center leading-4">
        11:15 AM
        <br />
        9/12/2022
      </div>
      <DesktopIcon className="ml-1 size-4" />
    </div>
  </footer>
);

export default function App() {
  return (
    <div className="flex h-screen flex-col overflow-hidden bg-[#00a99d] font-['DejaVu_Sans_Condensed','Noto_Sans',sans-serif] text-[11px] text-black">
      <Gradients />
      <div className="relative flex-1">
        <ul className="w-[76px]">
          {shortcuts.map(({ label, Icon }) => (
            <li key={label} className="h-[103px] pt-2">
              <a href="#" className="flex flex-col items-center gap-px leading-[18px] whitespace-nowrap text-white">
                <Icon className="size-12" />
                {label}
              </a>
            </li>
          ))}
        </ul>
        <SettingsWindow />
        <LibrariesWindow />
        <svg viewBox="0 0 14 22" className="absolute top-[122px] left-[365px] h-[22px] w-[14px]">
          <path d="M1 1v16l4-4 3 7 3-1.300-3-6.700h5z" fill="#fff" stroke="#000" />
        </svg>
      </div>
      <Taskbar />
    </div>
  );
}
